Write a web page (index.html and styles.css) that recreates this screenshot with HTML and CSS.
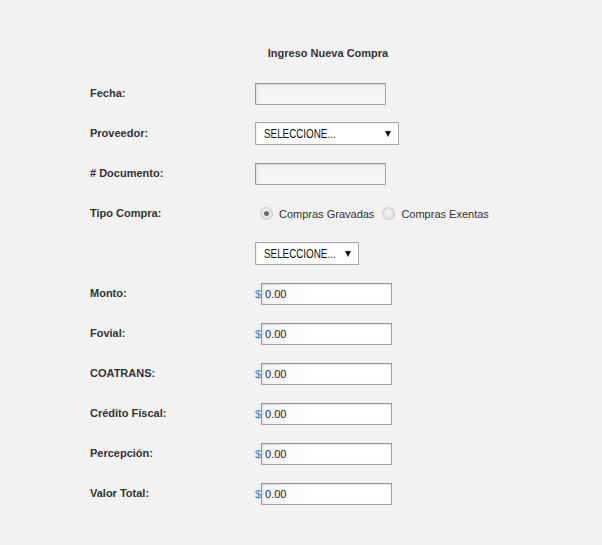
FILE: index.html
```html
<!DOCTYPE html>
<html lang="es">
<head>
<meta charset="utf-8">
<title>Ingreso Nueva Compra</title>
<link rel="stylesheet" href="styles.css">
</head>
<body>
<form class="form">
  <div class="title">Ingreso Nueva Compra</div>

  <div class="row">
    <label class="lbl">Fecha:</label>
    <div class="field"><input class="txt" type="text"></div>
  </div>

  <div class="row">
    <label class="lbl">Proveedor:</label>
    <div class="field">
      <div class="sel sel-wide"><span class="sel-text">SELECCIONE...</span><span class="arrow"></span></div>
    </div>
  </div>

  <div class="row">
    <label class="lbl"># Documento:</label>
    <div class="field"><input class="txt" type="text"></div>
  </div>

  <div class="row">
    <label class="lbl">Tipo Compra:</label>
    <div class="field radios">
      <span class="radio checked"></span><span class="rlabel">Compras Gravadas</span>
      <span class="radio"></span><span class="rlabel">Compras Exentas</span>
    </div>
  </div>

  <div class="row">
    <span class="lbl"></span>
    <div class="field">
      <div class="sel sel-narrow"><span class="sel-text">SELECCIONE...</span><span class="arrow"></span></div>
    </div>
  </div>

  <div class="row">
    <label class="lbl">Monto:</label>
    <div class="field money"><span class="cur">$</span><input class="txt num" type="text" value="0.00"></div>
  </div>
  <div class="row">
    <label class="lbl">Fovial:</label>
    <div class="field money"><span class="cur">$</span><input class="txt num" type="text" value="0.00"></div>
  </div>
  <div class="row">
    <label class="lbl">COATRANS:</label>
    <div class="field money"><span class="cur">$</span><input class="txt num" type="text" value="0.00"></div>
  </div>
  <div class="row">
    <label class="lbl">Crédito Fiscal:</label>
    <div class="field money"><span class="cur">$</span><input class="txt num" type="text" value="0.00"></div>
  </div>
  <div class="row">
    <label class="lbl">Percepción:</label>
    <div class="field money"><span class="cur">$</span><input class="txt num" type="text" value="0.00"></div>
  </div>
  <div class="row">
    <label class="lbl">Valor Total:</label>
    <div class="field money"><span class="cur">$</span><input class="txt num" type="text" value="0.00"></div>
  </div>
</form>
</body>
</html>
```

FILE: styles.css
```css
html, body {
  margin: 0;
  padding: 0;
  background: #f2f2f2;
}
body {
  font-family: "Liberation Sans", Arial, sans-serif;
  color: #333333;
  padding-top: 33px;
  height: 545px;
  box-sizing: border-box;
}
.form {
  margin-left: 90px;
  width: 476px;
  display: flex;
  flex-direction: column;
}
.title {
  height: 40px;
  line-height: 40px;
  text-align: center;
  font-weight: bold;
  font-size: 11px;
  color: #333;
}
.row {
  height: 40px;
  display: grid;
  grid-template-columns: 165px 1fr;
  align-items: center;
}
.lbl {
  font-weight: bold;
  font-size: 11px;
  color: #333;
}
.field {
  display: flex;
  align-items: center;
}
.txt {
  box-sizing: border-box;
  width: 131px;
  height: 22px;
  margin: 1px 0 0 0;
  border: 1px solid #a3a3a3;
  border-top-color: #8f8f8f;
  border-left-color: #999;
  background: linear-gradient(#f3f3f3, #f8f8f8);
  box-shadow: inset 1px 1px 3px rgba(0,0,0,0.10);
  font-family: "Liberation Sans", Arial, sans-serif;
  font-size: 11px;
  color: #1a1a2e;
  padding: 0 3px;
  outline: none;
}
.num {
  background: linear-gradient(90deg, #f6f6f6, #ffffff 40%);
  padding-left: 3px;
}
.sel {
  position: relative;
  box-sizing: border-box;
  height: 23px;
  border: 1px solid #a9a9a9;
  background: #ffffff;
  display: flex;
  align-items: center;
  padding-left: 8px;
  box-shadow: inset 1px 1px 2px rgba(0,0,0,0.06);
  overflow: hidden;
}
.sel-wide { width: 144px; margin-top: 1px; }
.sel-narrow { width: 104px; margin-top: 1px; }
.sel-text {
  display: inline-block;
  font-family: "Liberation Sans", Arial, sans-serif;
  font-size: 12px;
  color: #111;
  transform: scaleX(0.82);
  transform-origin: 0 50%;
  white-space: nowrap;
}
.arrow {
  position: absolute;
  right: 7px;
  top: 8px;
  width: 0;
  height: 0;
  border-left: 3.5px solid transparent;
  border-right: 3.5px solid transparent;
  border-top: 6px solid #111;
}
.radios {
  font-size: 11px;
  color: #333;
}
.radio {
  box-sizing: border-box;
  width: 13px;
  height: 13px;
  border-radius: 50%;
  border: 1px solid #c8c8c8;
  background: radial-gradient(circle at 50% 40%, #f2f2f2, #dcdcdc);
  margin: 0 6px 0 5px;
  display: inline-flex;
  align-items: center;
  justify-content: center;
}
.radio + .rlabel + .radio { margin-left: 8px; }
.radio.checked::after {
  content: "";
  width: 5px;
  height: 5px;
  border-radius: 50%;
  background: #6e6e6e;
}
.rlabel { margin-top: 2px; }
.money .cur {
  font-size: 11px;
  color: #3f7cc0;
  width: 6px;
  overflow: hidden;
  margin-top: 1px;
}
```
